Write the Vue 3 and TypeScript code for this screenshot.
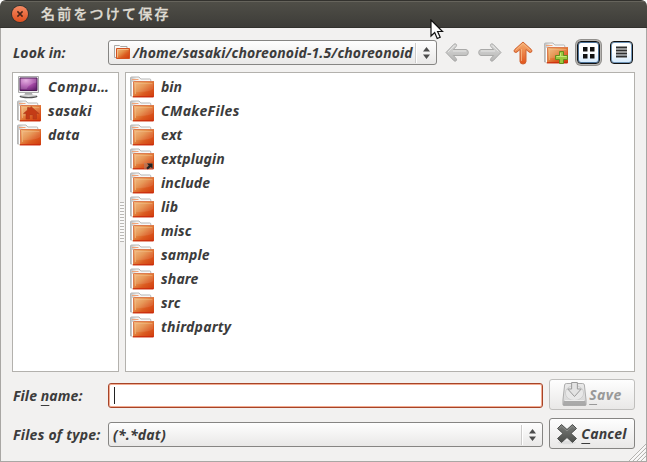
<script setup lang="ts">
import { ref } from 'vue'

interface Entry {
  name: string
  kind: 'folder' | 'home' | 'link' | 'computer'
  spacing: number
}

const places: Entry[] = [
  { name: 'Compu…', kind: 'computer', spacing: 0.6 },
  { name: 'sasaki', kind: 'home', spacing: 0.3 },
  { name: 'data', kind: 'folder', spacing: 0.3 },
]

const entries: Entry[] = [
  { name: 'bin', kind: 'folder', spacing: 0 },
  { name: 'CMakeFiles', kind: 'folder', spacing: 0.38 },
  { name: 'ext', kind: 'folder', spacing: 0.1 },
  { name: 'extplugin', kind: 'link', spacing: 0.1 },
  { name: 'include', kind: 'folder', spacing: 0.15 },
  { name: 'lib', kind: 'folder', spacing: 0.15 },
  { name: 'misc', kind: 'folder', spacing: 0.1 },
  { name: 'sample', kind: 'folder', spacing: 0.15 },
  { name: 'share', kind: 'folder', spacing: 0.15 },
  { name: 'src', kind: 'folder', spacing: 0.2 },
  { name: 'thirdparty', kind: 'folder', spacing: 0.25 },
]

const path = ref('/home/sasaki/choreonoid-1.5/choreonoid')
const filter = ref('(*.*dat)')
</script>

<template>
  <div class="window">
    <svg class="defs" width="0" height="0">
      <defs>
        <linearGradient id="front" x1="0" y1="0" x2="1" y2="1">
          <stop offset="0" stop-color="#f3bd83" />
          <stop offset="0.4" stop-color="#e58f48" />
          <stop offset="0.65" stop-color="#db5b20" />
          <stop offset="1" stop-color="#d0390c" />
        </linearGradient>
        <linearGradient id="back" x1="0" y1="0" x2="1" y2="0">
          <stop offset="0" stop-color="#bdbdbd" />
          <stop offset="0.3" stop-color="#f4f3f2" />
          <stop offset="1" stop-color="#fafafa" />
        </linearGradient>
        <linearGradient id="grey" x1="0" y1="0" x2="0" y2="1">
          <stop offset="0" stop-color="#dcdcdb" />
          <stop offset="1" stop-color="#b5b5b4" />
        </linearGradient>
        <linearGradient id="orange" x1="0" y1="0" x2="0" y2="1">
          <stop offset="0" stop-color="#f6b173" />
          <stop offset="1" stop-color="#e2521a" />
        </linearGradient>
        <radialGradient id="screen" cx="0.35" cy="0.2" r="0.9">
          <stop offset="0" stop-color="#e0a0dc" />
          <stop offset="0.5" stop-color="#ab4fab" />
          <stop offset="1" stop-color="#64206e" />
        </radialGradient>
        <linearGradient id="disk" x1="0" y1="0" x2="0" y2="1">
          <stop offset="0" stop-color="#e9e9e9" />
          <stop offset="0.75" stop-color="#dadada" />
          <stop offset="1" stop-color="#999" />
        </linearGradient>
        <linearGradient id="dark" x1="0" y1="0" x2="0" y2="1">
          <stop offset="0" stop-color="#7b7d7a" />
          <stop offset="1" stop-color="#4b4d4a" />
        </linearGradient>
        <symbol id="folder" viewBox="0 0 24 22">
          <path d="M.5 20V2q0-1 1-1h7.500l1.800 2h9q1 0 1 1V20z" fill="url(#back)" stroke="#b7b7b6" />
          <path d="M2 3.500h6.500" stroke="#f0a57a" />
          <path d="M2.500 6v14" stroke="#fff" />
          <path d="M3 6q0-1 1-1h20v15.300q0 1-1 1H2.200q.8-.5.8-1.600z" fill="url(#front)" />
          <path d="M3.500 19V6q0-.5.7-.5h19.300" fill="none" stroke="#dd7c50" />
          <path d="M5.500 18V7.500h17" fill="none" stroke="#f7cba0" stroke-opacity=".45" />
          <path d="M6 8h17v5q-4 3.500-17 3z" fill="#fff" fill-opacity=".1" />
          <path d="M3 20.800h20.500" stroke="#c8240b" />
        </symbol>
      </defs>
    </svg>

    <header class="titlebar">
      <button class="close" aria-label="Close">
        <svg width="16" height="16" viewBox="0 0 16 16">
          <path d="M5.400 5.400l5.200 5.200M10.600 5.400l-5.200 5.200" stroke="#4a2418" stroke-width="1.500" />
        </svg>
      </button>
      <h1>名前をつけて保存</h1>
    </header>

    <main class="body">
      <div class="toolbar">
        <label class="lookin">Look in:</label>
        <div class="combo pathbox">
          <svg class="small-folder" width="17" height="15" viewBox="0 0 17 15">
            <path d="M.5 12.500V.5h5l1 1h6.500v11z" fill="#f8f8f7" stroke="#aaa9a6" />
            <path d="M2.500 3.500h13v10h-13z" fill="url(#front)" stroke="#d4521f" />
            <path d="M3.500 12.500V4.500h11" fill="none" stroke="#f5c79b" stroke-opacity=".7" />
          </svg>
          <span class="path">{{ path }}</span>
          <span class="spin">
            <svg width="9" height="12" viewBox="0 0 9 12"><path d="M1 4.500L4.500 0 8 4.500zM1 7.500h7L4.500 12z" fill="#4c4c4c" /></svg>
          </span>
        </div>
        <div class="tools">
          <svg class="back" width="24" height="22" viewBox="0 0 24 22">
            <path d="M1 10.500L9 2.200Q10.300 1.300 11.300 2.400 12 3.500 11 4.600L8.300 7.500H21Q23.300 7.800 23.300 10.500T21 13.500H8.300L11 16.400Q12 17.500 11.300 18.600 10.300 19.700 9 18.800Z" fill="url(#grey)" stroke="#a9a9a8" />
            <path d="M3 10L9.500 3.500M8 9h13" stroke="#e4e4e3" fill="none" />
          </svg>
          <svg class="forward" width="24" height="22" viewBox="0 0 24 22">
            <path d="M23 10.500L15 2.200Q13.700 1.300 12.700 2.400 12 3.500 13 4.600L15.700 7.500H3Q.7 7.800.7 10.500T3 13.500H15.700L13 16.400Q12 17.500 12.700 18.600 13.700 19.700 15 18.800Z" fill="url(#grey)" stroke="#a9a9a8" />
            <path d="M3 9h14M15 4l5.500 5.500" stroke="#e4e4e3" fill="none" />
          </svg>
          <svg class="up" width="20" height="24" viewBox="0 0 20 24">
            <path d="M10 1L18.300 8.500Q19.500 9.800 18.500 11 17.500 12 16 11L13 8.500V20.500Q12.800 23 10 23T7 20.500V8.500L4 11Q2.500 12 1.500 11 .5 9.800 1.700 8.500Z" fill="url(#orange)" stroke="#ce6230" />
            <path d="M2.500 9.500L10 2.500l7.500 7M8.500 8v12" stroke="#f8c08d" stroke-opacity=".7" fill="none" />
          </svg>
          <svg class="newfolder" width="24" height="22" viewBox="0 0 24 22">
            <use href="#folder" width="24" height="22" />
            <path d="M15.500 9.500h4v4h4v4h-4v4h-4v-4h-4v-4h4z" fill="#9bc83e" stroke="#628d1c" />
            <path d="M16.500 11v3.500h-4M16.500 14.500h6" fill="none" stroke="#c9e879" />
          </svg>
          <button class="view active" aria-label="Icons">
            <svg width="21" height="21" viewBox="0 0 21 21"><path d="M5 5h4.500v4.500H5zM12 5h4.500v4.500H12zM5 12h4.500v4.500H5zM12 12h4.500v4.500H12z" fill="#111" /></svg>
          </button>
          <button class="view list" aria-label="List">
            <svg width="21" height="21" viewBox="0 0 21 21"><path d="M5 5.500h11M5 8.500h11M5 11.500h11M5 14.500h11" stroke="#303030" stroke-width="1.800" /></svg>
          </button>
        </div>
      </div>

      <div class="panes">
        <ul class="pane places">
          <li v-for="p in places" :key="p.name">
            <svg v-if="p.kind === 'computer'" width="24" height="24" viewBox="0 0 24 24">
              <path d="M8 18h7l1 3H7z" fill="#aaa" />
              <ellipse cx="11.500" cy="21.500" rx="9" ry="1.700" fill="#555" />
              <ellipse cx="11.500" cy="20.700" rx="8" ry="1.300" fill="#d7d7d7" />
              <path d="M1.500 1.500h20v16h-20z" fill="#eee" stroke="#aaa" />
              <path d="M3 3h17v12.500H3z" fill="url(#screen)" stroke="#4d1c56" />
              <path d="M3.500 3.500h16v4q-7 1-10 6.500h-6z" fill="#fff" fill-opacity=".16" />
            </svg>
            <svg v-else class="icon" width="24" height="22" viewBox="0 0 24 22">
              <use href="#folder" width="24" height="22" />
              <path v-if="p.kind === 'home'" d="M14 6.500l8 7h-2.500v5.500h-3.500v-4h-3.500v4H9v-5.500H6.500l4-3.500V7.500h2v1.300z" fill="#c43b16" stroke="#a9371a" stroke-width=".5" />
            </svg>
            <span :style="{ letterSpacing: p.spacing + 'px' }">{{ p.name }}</span>
          </li>
        </ul>
        <div class="splitter"><i></i></div>
        <ul class="pane files">
          <li v-for="e in entries" :key="e.name">
            <svg class="icon" width="24" height="22" viewBox="0 0 24 22">
              <use href="#folder" width="24" height="22" />
              <g v-if="e.kind === 'link'">
                <path d="M14 15h9v6h-9z" fill="#a58778" fill-opacity=".5" />
                <path d="M17 15.500h5.500v5l-1.700-1.500-3 2.500-1.500-1.500 2.500-2.500z" fill="#222" />
              </g>
            </svg>
            <span :style="{ letterSpacing: e.spacing + 'px' }">{{ e.name }}</span>
          </li>
        </ul>
      </div>

      <div class="form">
        <label class="fname">File <u>n</u>ame:</label>
        <div class="input"><i class="caret"></i></div>
        <button class="btn save">
          <svg width="25" height="26" viewBox="0 0 26 26" preserveAspectRatio="none">
            <path d="M4.500 2.500h17q1.500 0 1.800 1.500L25 19v4.500q0 1-1 1H2q-1 0-1-1V19L2.700 4q.3-1.500 1.800-1.500z" fill="url(#disk)" stroke="#aaa" />
            <ellipse cx="13" cy="12" rx="9.500" ry="7.500" fill="#e8e8e8" stroke="#cecece" />
            <path d="M2 20h22v3.500H2z" fill="#aaa" />
            <path d="M3 19.500h20" stroke="#eee" />
            <path d="M10 1.500h6V8h4l-7 7.500L6 8h4z" fill="#e3e3e3" stroke="#999" />
          </svg>
          <span><u>S</u>ave</span>
        </button>
        <label class="ftype">Files of type:</label>
        <div class="combo typebox">
          <span class="filter">{{ filter }}</span>
          <span class="spin">
            <svg width="9" height="12" viewBox="0 0 9 12"><path d="M1 4.500L4.500 0 8 4.500zM1 7.500h7L4.500 12z" fill="#4c4c4c" /></svg>
          </span>
        </div>
        <button class="btn cancel">
          <svg width="22" height="22" viewBox="0 0 22 22">
            <ellipse cx="11" cy="19.500" rx="9" ry="1.800" fill="#ddd" />
            <path d="M5.500 1.500L11 6.500l5.500-5L20.500 5.500l-5.500 5 5.500 5L16.500 19.500 11 14.500l-5.500 5L1.500 15.500l5.500-5-5.500-5z" fill="url(#dark)" stroke="#4d4f4d" stroke-linejoin="round" />
            <path d="M3 5.500l2.500-2.500 5.500 5 5.500-5 2.500 2.500" fill="none" stroke="#8b8d8a" />
          </svg>
          <span><u>C</u>ancel</span>
        </button>
      </div>
    </main>
    <svg class="grip" width="17" height="17" viewBox="0 0 17 17">
      <path d="M0 17L17 0M4 17L17 4M8 17L17 8M12 17l5-5" stroke="#b5b3b0" />
      <path d="M1.500 17L17 1.500M5.500 17L17 5.500M9.500 17L17 9.500M13.500 17l3.500-3.500" stroke="#fff" />
    </svg>
    <svg class="cursor" width="14" height="21" viewBox="0 0 14 21">
      <path d="M1 1v16l3.700-3.500 2.500 6 3-1.300-2.600-5.700H12.500z" fill="#fff" stroke="#111" stroke-width="1.200" />
    </svg>
  </div>
</template>

<style>
body { margin: 0; background: #fff; }
</style>

<style scoped>
* { box-sizing: border-box; }
.window {
  position: relative;
  width: 647px;
  height: 462px;
  background: #f2f1f0;
  border-radius: 6px 6px 0 0;
  overflow: hidden;
  color: #3c3c3c;
  font: italic bold 14px/20px "Noto Sans", "Open Sans", "Noto Sans CJK JP", sans-serif;
  white-space: nowrap;
}
.defs { position: absolute; }
.titlebar {
  height: 28px;
  display: flex;
  align-items: center;
  padding-left: 12px;
  background: linear-gradient(#504f48, #3d3c38);
  border-top: 1px solid #33322e;
  border-bottom: 1px solid #32312d;
  box-shadow: inset 0 1px #66645c;
}
.close {
  width: 16px;
  height: 16px;
  padding: 0;
  border: 0;
  border-radius: 50%;
  background: linear-gradient(#f58a63, #e0501f);
  box-shadow: 0 0 0 1px #35322d;
}
.close svg { display: block; }
h1 {
  margin: 0 0 2px 13px;
  font: 500 14px/20px "Noto Sans CJK JP", sans-serif;
  letter-spacing: 2.200px;
  color: #dfdbd2;
  -webkit-text-stroke: 0.3px #dfdbd2;
}
.body {
  height: 434px;
  padding: 12px 11px 0 11px;
  border: 1px solid #a9a7a4;
  border-top: 0;
}
.toolbar { display: flex; align-items: flex-start; height: 26px; }
.lookin { width: 96px; padding: 3px 0 0 1px; letter-spacing: 0.100px; }
.combo {
  display: flex;
  align-items: center;
  height: 25px;
  border: 1px solid #868583;
  border-radius: 3px;
  background: linear-gradient(#fefefe, #e9e8e7);
}
.pathbox { width: 329px; padding-left: 5px; }
.small-folder { flex: none; }
.path { margin-left: 2px; flex: 1; width: 0; letter-spacing: 0.120px; }
.spin {
  width: 21px;
  height: 20px;
  display: flex;
  align-items: center;
  justify-content: center;
  border-left: 1px solid #cdcccb;
  box-shadow: inset 1px 0 #fff;
}
.tools { display: flex; align-items: center; height: 25px; }
.back { margin-left: 8px; }
.forward { margin-left: 9px; }
.up { margin-left: 11px; }
.newfolder { margin-left: 11px; }
.view {
  width: 23px;
  height: 23px;
  padding: 0;
  border: 1px solid #111;
  border-radius: 4px;
  background: linear-gradient(#fff 45%, #d3e9fc);
  box-shadow: inset 0 0 0 1px #7095b8;
}
.view svg { display: block; }
.view.active { margin-left: 9px; box-shadow: inset 0 0 0 1px #4c7298, 0 0 0 1px #b9b7b4, 0 0 0 2px #92908d; }
.view.list { margin-left: 10px; }
.panes { display: flex; height: 300px; margin-top: 6px; }
.pane {
  margin: 0;
  padding: 2px 0 0 4px;
  list-style: none;
  border: 1px solid #b3b1ad;
  background: #fff;
}
.places { width: 107px; }
.files { width: 510px; }
.pane li { display: flex; align-items: center; height: 24px; gap: 7px; }
.icon { margin-bottom: 1px; }
.splitter { width: 6px; display: flex; align-items: center; justify-content: center; }
.splitter i { width: 4px; height: 40px; background: repeating-linear-gradient(#bab8b5 0 1px, #fafafa 1px 3px); }
.form {
  display: grid;
  grid-template-columns: 96px 435px 86px;
  grid-template-rows: 31px 31px;
  row-gap: 8px;
  align-items: center;
  margin-top: 7px;
}
.fname, .ftype { padding: 2px 0 0 1px; }
.fname { letter-spacing: 0.100px; }
.ftype { letter-spacing: 0.250px; }
u { text-decoration-thickness: 1px; text-underline-offset: 4px; text-decoration-skip-ink: none; }
.input {
  height: 25px;
  margin-top: 2px;
  padding: 3px 5px;
  border: 1px solid #a64428;
  border-radius: 3px;
  background: #fff;
  box-shadow: inset 0 0 0 1px #f2ab91;
}
.caret { display: block; width: 1px; height: 17px; background: #222; }
.typebox { padding-left: 4px; margin-top: 2px; }
.filter { flex: 1; letter-spacing: 0.200px; }
.btn {
  display: flex;
  align-items: center;
  justify-content: center;
  height: 31px;
  margin-left: 6px;
  width: 86px;
  padding: 0;
  border: 1px solid #868583;
  border-radius: 3px;
  background: linear-gradient(#fefefe, #e9e8e7);
  color: #3c3c3c;
  font: inherit;
}
.save { border-color: #c0bfbd; color: #999; gap: 2px; letter-spacing: 0.500px; }
.save svg { margin-bottom: 2px; }
.cancel { gap: 3px; letter-spacing: 0.200px; }
.cancel span { margin-right: 1px; }
.grip { position: absolute; right: 1px; bottom: 1px; }
.cursor { position: absolute; left: 430px; top: 19px; }
</style>
